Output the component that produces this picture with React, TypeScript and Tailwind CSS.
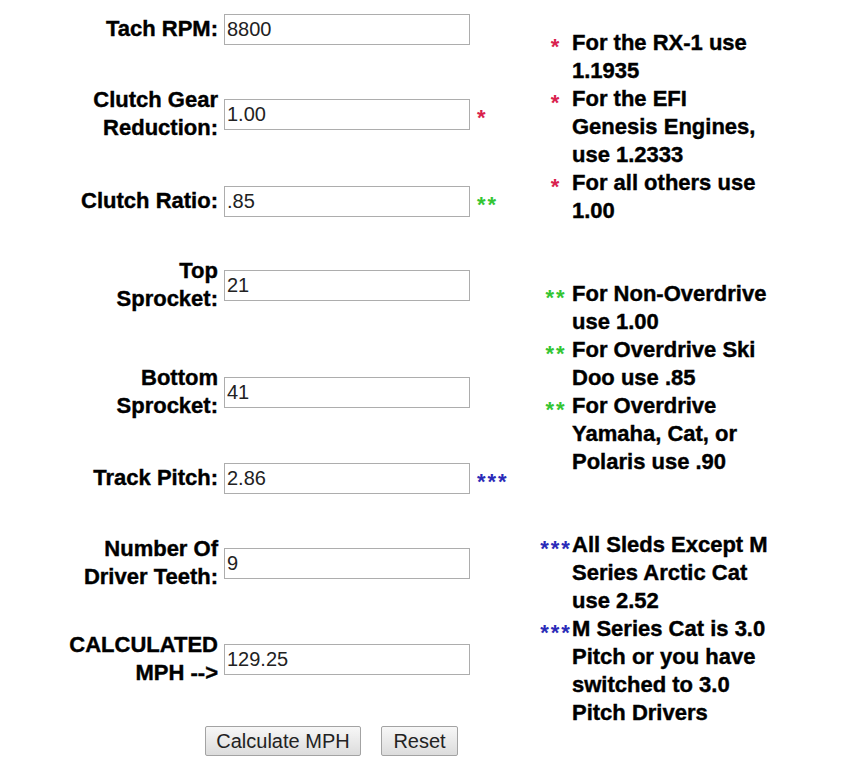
import { useState } from "react";

type Field = {
  id: string;
  label: string[];
  value: string;
  mark?: "red" | "green" | "blue";
  gap: string;
};

const FIELDS: Field[] = [
  { id: "rpm", label: ["Tach RPM:"], value: "8800", gap: "mt-[1px]" },
  { id: "gear", label: ["Clutch Gear", "Reduction:"], value: "1.00", mark: "red", gap: "mt-[29px]" },
  { id: "ratio", label: ["Clutch Ratio:"], value: ".85", mark: "green", gap: "mt-[31px]" },
  { id: "top", label: ["Top", "Sprocket:"], value: "21", gap: "mt-[28px]" },
  { id: "bottom", label: ["Bottom", "Sprocket:"], value: "41", gap: "mt-[51px]" },
  { id: "pitch", label: ["Track Pitch:"], value: "2.86", mark: "blue", gap: "mt-[30px]" },
  { id: "teeth", label: ["Number Of", "Driver Teeth:"], value: "9", gap: "mt-[29px]" },
  { id: "mph", label: ["CALCULATED", "MPH -->"], value: "129.25", gap: "mt-[40px]" },
];

function Mark({ kind }: { kind?: "red" | "green" | "blue" }) {
  if (kind === "red") return <span className="text-[#d9214d]">*</span>;
  if (kind === "green") return <span className="text-[#33c533]">**</span>;
  if (kind === "blue") return <span className="text-[#2b2bb8]">***</span>;
  return null;
}

const NOTES: { kind: "red" | "green" | "blue"; text: string; gap?: boolean }[] = [
  { kind: "red", text: "For the RX-1 use 1.1935" },
  { kind: "red", text: "For the EFI Genesis Engines, use 1.2333" },
  { kind: "red", text: "For all others use 1.00" },
  { kind: "green", text: "For Non-Overdrive use 1.00", gap: true },
  { kind: "green", text: "For Overdrive Ski Doo use .85" },
  { kind: "green", text: "For Overdrive Yamaha, Cat, or Polaris use .90" },
  { kind: "blue", text: "All Sleds Except M Series Arctic Cat use 2.52", gap: true },
  { kind: "blue", text: "M Series Cat is 3.0 Pitch or you have switched to 3.0 Pitch Drivers" },
];

export default function App() {
  const [values, setValues] = useState<Record<string, string>>(
    Object.fromEntries(FIELDS.map((f) => [f.id, f.value]))
  );

  const calculate = () => {
    const n = (k: string) => parseFloat(values[k]) || 0;
    const mph =
      (n("rpm") / n("gear") / n("ratio") / (n("bottom") / n("top"))) *
      n("teeth") *
      n("pitch") *
      60 /
      63360;
    setValues((v) => ({ ...v, mph: isFinite(mph) ? mph.toFixed(2) : "" }));
  };

  const reset = () =>
    setValues(Object.fromEntries(FIELDS.map((f) => [f.id, f.id === "mph" ? "" : f.value])));

  return (
    <div
      className="min-h-[768px] w-[855px] bg-white text-black flex"
      style={{ fontFamily: '"Liberation Sans", Arial, sans-serif' }}
    >
      <div className="flex flex-col">
        {FIELDS.map((f) => (
          <div key={f.id} className={`flex items-center h-[56px] ${f.gap}`}>
            <div className="w-[218px] text-right font-bold text-[22px] leading-[28px] [-webkit-text-stroke:0.4px_black]">
              {f.label.map((l) => (
                <div key={l}>{l}</div>
              ))}
            </div>
            <input
              value={values[f.id]}
              onChange={(e) => setValues((v) => ({ ...v, [f.id]: e.target.value }))}
              className="ml-[6px] w-[246px] h-[31px] border border-[#adadad] px-[2px] text-[20px] text-[#222] outline-none"
            />
            <div className="ml-[7px] w-[60px] font-bold text-[22px] tracking-[2px] pt-[6px]">
              <Mark kind={f.mark} />
            </div>
          </div>
        ))}
        <div className="flex gap-[20px] ml-[205px] mt-[39px]">
          <button
            onClick={calculate}
            className="h-[30px] w-[156px] border border-[#a3a3a3] rounded-[2px] bg-gradient-to-b from-[#f7f7f7] to-[#dcdcdc] text-[20px] text-[#222] leading-none"
          >
            Calculate MPH
          </button>
          <button
            onClick={reset}
            className="h-[30px] w-[77px] border border-[#a3a3a3] rounded-[2px] bg-gradient-to-b from-[#f7f7f7] to-[#dcdcdc] text-[20px] text-[#222] leading-none"
          >
            Reset
          </button>
        </div>
      </div>
      <div className="ml-[3px] pt-[29px] font-bold text-[22px] leading-[28px]">
        {NOTES.map((n) => (
          <div key={n.text} className={`flex ${n.gap ? "mt-[55px]" : ""}`}>
            <div className="w-[32px] text-center tracking-[2px] pt-[4px]">
              <Mark kind={n.kind} />
            </div>
            <div className="w-[205px] [-webkit-text-stroke:0.4px_black]">{n.text}</div>
          </div>
        ))}
      </div>
    </div>
  );
}
